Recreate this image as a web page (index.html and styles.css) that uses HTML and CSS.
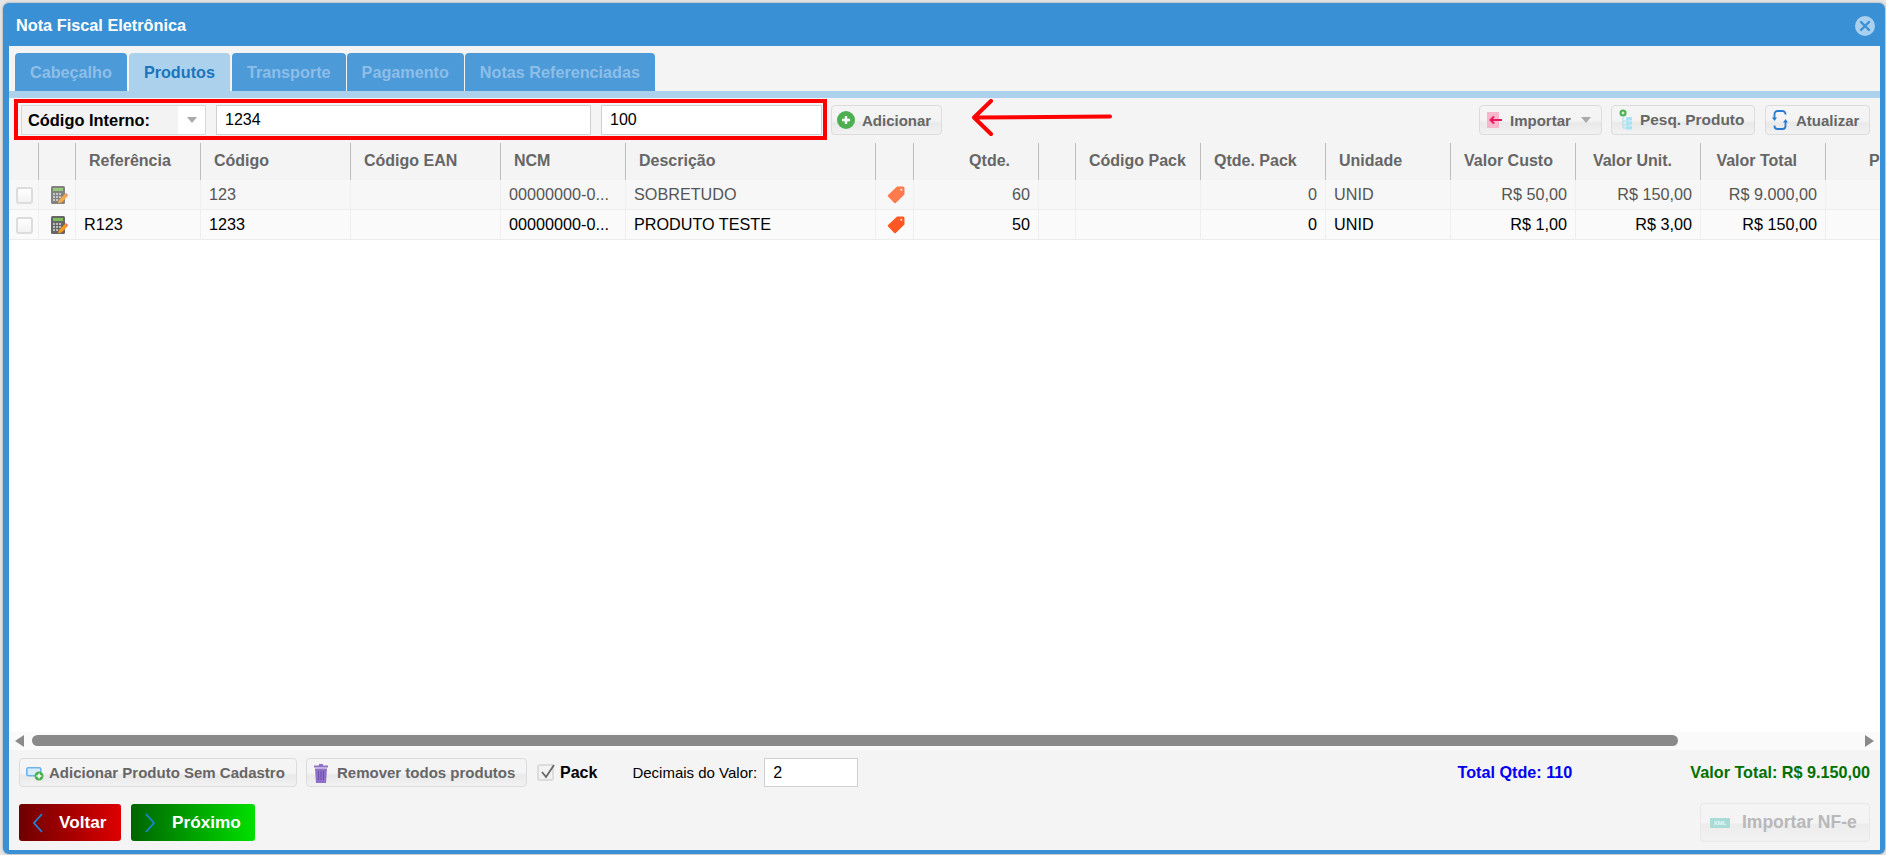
FILE: index.html
```html
<!DOCTYPE html>
<html lang="pt-BR">
<head>
<meta charset="utf-8">
<title>Nota Fiscal Eletrônica</title>
<link rel="stylesheet" href="styles.css">
</head>
<body>
<svg class="defs" width="0" height="0" aria-hidden="true">
  <symbol id="calc" viewBox="0 0 17 18">
    <rect x="0" y="0" width="14" height="18" rx="1.500" fill="#666"/>
    <rect x="2" y="2" width="10" height="3" fill="#7fc05a"/>
    <path d="M2 7h2v2H2zM5 7h2v2H5zM8 7h2v2H8zM2 10h2v2H2zM5 10h2v2H5zM8 10h2v2H8zM2 13h2v2H2zM5 13h2v2H5z" fill="#bbb"/>
    <path d="M7 17.500l1-3.500 6-6 2.500 2.500-6 6z" fill="#f59a1c"/>
    <path d="M14 8l1-1 2 2-1 1.500z" fill="#e8685c"/>
  </symbol>
  <symbol id="tag" viewBox="0 0 17 17">
    <path d="M9.500 .5H15a1.500 1.500 0 0 1 1.500 1.500v6L8.300 16a1 1 0 0 1-1.400 0L1 10a1 1 0 0 1 0-1.400z" fill="currentColor"/>
    <circle cx="13.500" cy="3.500" r="1" fill="#ffe3d8"/>
  </symbol>
</svg>

<main class="window">
  <header class="title-bar">
    <h1 class="title">Nota Fiscal Eletrônica</h1>
    <svg class="close" viewBox="0 0 20 20"><circle cx="10" cy="10" r="10" fill="#a9d0ef"/><path d="M6 6l8 8M14 6l-8 8" stroke="#3a90d4" stroke-width="2.400" stroke-linecap="round"/></svg>
  </header>

  <div class="content">
    <nav class="tabs">
      <a class="tab">Cabeçalho</a>
      <a class="tab active">Produtos</a>
      <a class="tab">Transporte</a>
      <a class="tab">Pagamento</a>
      <a class="tab">Notas Referenciadas</a>
    </nav>
    <div class="band"></div>

    <div class="toolbar">
      <div class="highlight">
        <div class="select"><span class="select-label">Código Interno:</span><span class="select-arrow"><i class="caret"></i></span></div>
        <div class="field code">1234</div>
        <div class="field qty">100</div>
      </div>
      <button class="btn add-btn">
        <svg class="ico18" viewBox="0 0 18 18"><circle cx="9" cy="9" r="9" fill="#4caf50"/><path d="M9 5v8M5 9h8" stroke="#fff" stroke-width="2.400"/></svg>
        Adicionar
      </button>
      <svg class="arrow" viewBox="0 0 144 38"><path d="M140 17.500L4 18.500M21 2L4 18.500 21 35" fill="none" stroke="#f00" stroke-width="4" stroke-linecap="round" stroke-linejoin="round"/></svg>
      <div class="tool-right">
        <button class="btn import-btn">
          <svg class="ico-imp" viewBox="0 0 15 16"><rect width="12" height="16" fill="#f8b6cc"/><path d="M3 8h12M7 4.500L3.500 8 7 11.500" fill="none" stroke="#f0185c" stroke-width="2"/></svg>
          Importar<i class="caret import-caret"></i>
        </button>
        <button class="btn pesq-btn">
          <svg class="ico-tree" viewBox="0 0 14 21"><circle cx="4" cy="4" r="3.500" fill="#4caf50"/><path d="M2.500 4h3M4 2.500v3" stroke="#fff"/><path d="M4 8v11h6M4 12h6M4 16h6" fill="none" stroke="#a9dcf5"/><rect x="7" y="8" width="6" height="3.500" fill="#a9e3f5"/><rect x="7" y="12.500" width="6" height="3.500" fill="#a9e3f5"/><rect x="7" y="17" width="6" height="3.500" fill="#a9e3f5"/></svg>
          Pesq. Produto
        </button>
        <button class="btn refresh-btn">
          <svg class="ico-ref" viewBox="0 0 16 22"><path d="M13.500 5.500V5a3 3 0 0 0-3-3H5.500a3 3 0 0 0-3 3v4M2.500 16.500V17a3 3 0 0 0 3 3h5a3 3 0 0 0 3-3v-4" fill="none" stroke="#2a7bd0" stroke-width="1.800"/><path d="M0 8.500h5L2.500 12zM16 13.500h-5L13.500 10z" fill="#2a7bd0"/></svg>
          Atualizar
        </button>
      </div>
    </div>

    <div class="grid-wrap">
      <table class="grid">
        <colgroup>
          <col class="c30"><col class="c37"><col class="c125"><col class="c150"><col class="c150"><col class="c125"><col class="c250"><col class="c38"><col class="c125"><col class="c37"><col class="c125"><col class="c125"><col class="c125"><col class="c125"><col class="c125"><col class="c125"><col class="c125">
        </colgroup>
        <thead>
          <tr>
            <th></th><th></th>
            <th>Referência</th><th>Código</th><th>Código EAN</th><th>NCM</th><th>Descrição</th><th></th>
            <th class="th-num">Qtde.</th><th></th><th>Código Pack</th><th>Qtde. Pack</th><th>Unidade</th>
            <th>Valor Custo</th><th class="th-num">Valor Unit.</th><th class="th-num">Valor Total</th><th class="th-last">P</th>
          </tr>
        </thead>
        <tbody>
          <tr class="row-muted">
            <td class="center"><span class="check"></span></td>
            <td class="center"><svg class="ico-calc"><use href="#calc"/></svg></td>
            <td></td><td>123</td><td></td><td>00000000-0...</td><td>SOBRETUDO</td>
            <td class="center"><svg class="ico-tag"><use href="#tag"/></svg></td>
            <td class="num">60</td><td></td><td></td><td class="num">0</td><td>UNID</td>
            <td class="num">R$ 50,00</td><td class="num">R$ 150,00</td><td class="num">R$ 9.000,00</td><td></td>
          </tr>
          <tr>
            <td class="center"><span class="check"></span></td>
            <td class="center"><svg class="ico-calc"><use href="#calc"/></svg></td>
            <td>R123</td><td>1233</td><td></td><td>00000000-0...</td><td>PRODUTO TESTE</td>
            <td class="center"><svg class="ico-tag"><use href="#tag"/></svg></td>
            <td class="num">50</td><td></td><td></td><td class="num">0</td><td>UNID</td>
            <td class="num">R$ 1,00</td><td class="num">R$ 3,00</td><td class="num">R$ 150,00</td><td></td>
          </tr>
        </tbody>
      </table>
    </div>

    <div class="scrollbar">
      <i class="sb-left"></i>
      <div class="sb-track"><div class="sb-thumb"></div></div>
      <i class="sb-right"></i>
    </div>

    <div class="footer">
      <div class="foot-row">
        <button class="btn foot-btn add-free">
          <svg class="ico-add" viewBox="0 0 18 17"><rect x=".8" y="3.800" width="14" height="8" rx="1.500" fill="#d8ecfb" stroke="#6db3ea" stroke-width="1.600"/><circle cx="13" cy="12" r="4.500" fill="#4caf50"/><path d="M13 9.500v5M10.500 12h5" stroke="#fff" stroke-width="1.500"/></svg>
          Adicionar Produto Sem Cadastro
        </button>
        <button class="btn foot-btn remove-all">
          <svg class="ico-trash" viewBox="0 0 14 20"><path d="M5 1h4v1.500h5v2H0v-2h5z" fill="#8e6fc9"/><path d="M1 5.500h12L12 20H2z" fill="#8e6fc9"/><path d="M4.500 8v9M7 8v9M9.500 8v9" stroke="#6f51ad"/></svg>
          Remover todos produtos
        </button>
        <span class="pack-check"><svg class="ico-tick" viewBox="0 0 17 17"><path d="M4 8l4 5 8-12" fill="none" stroke="#666" stroke-width="1.800"/></svg></span>
        <span class="pack-label">Pack</span>
        <span class="dec-label">Decimais do Valor:</span>
        <div class="field dec">2</div>
        <span class="total-qty">Total Qtde: 110</span>
        <span class="total-val">Valor Total: R$ 9.150,00</span>
      </div>
      <div class="foot-row nav-row">
        <button class="nav-btn back"><svg class="chev" viewBox="0 0 12 20"><path d="M10 1L2 10l8 9" fill="none" stroke="#1e84d8" stroke-width="1.800"/></svg>Voltar</button>
        <button class="nav-btn next"><svg class="chev" viewBox="0 0 12 20"><path d="M2 1l8 9-8 9" fill="none" stroke="#1e84d8" stroke-width="1.800"/></svg>Próximo</button>
        <button class="btn import-nfe"><span class="xml">XML</span>Importar NF-e</button>
      </div>
    </div>
  </div>
</main>
</body>
</html>
```
FILE: styles.css
```css
* { box-sizing: border-box; }
html, body { height: 100%; }
body {
  margin: 0;
  background: #e6e6e6;
  font-family: "Liberation Sans", Arial, sans-serif;
  overflow: hidden;
  padding: 3px 1px 1px 3px;
}
.defs { display: block; height: 0; }
button { font-family: inherit; cursor: default; }

.window {
  height: 851px;
  display: flex;
  flex-direction: column;
  background: #3a90d4;
  border-radius: 6px;
  padding: 0 5px 4px 6px;
  box-shadow: 0 0 3px rgba(0,0,0,.35);
}
.title-bar {
  height: 43px;
  flex: none;
  display: flex;
  align-items: center;
  justify-content: space-between;
  padding: 2px 0 0 7px;
}
.title { margin: 0; font-size: 16.3px; font-weight: bold; color: #fff; }
.close { width: 20px; height: 20px; margin-right: 5px; }

.content {
  flex: 1;
  min-height: 0;
  display: flex;
  flex-direction: column;
  background: #f4f4f4;
}

.tabs { display: flex; gap: 1px; padding: 7px 0 0 6px; height: 45px; flex: none; }
.tab {
  display: flex;
  align-items: center;
  justify-content: center;
  height: 38px;
  padding: 0 15px;
  background: #4c9ad8;
  color: #8cbee8;
  font-size: 16.2px;
  font-weight: bold;
  border-radius: 4px 4px 0 0;
  white-space: nowrap;
}
.tab.active { background: #acd1ec; color: #1b75bb; margin: 0 1px; }
.band { height: 7px; flex: none; background: #acd1ec; }

.toolbar {
  height: 45px;
  flex: none;
  display: flex;
  align-items: flex-start;
  padding: 1px 10px 0 5px;
}
.highlight {
  display: flex;
  gap: 10px;
  border: 4px solid #f00;
  padding: 2px 1px 1px 3px;
  height: 41px;
}
.select {
  width: 185px;
  height: 30px;
  display: flex;
  background: #f3f3f3;
  border: 1px solid #d8d8d8;
}
.select-label {
  flex: 1;
  padding-left: 6px;
  font-size: 16.4px;
  font-weight: bold;
  line-height: 28px;
  color: #000;
  white-space: nowrap;
}
.select-arrow {
  width: 27px;
  background: #fff;
  display: flex;
  align-items: center;
  justify-content: center;
}
.caret {
  display: block;
  width: 0;
  height: 0;
  border-left: 5px solid transparent;
  border-right: 5px solid transparent;
  border-top: 6px solid #aaa;
}
.field {
  height: 30px;
  background: #fff;
  border: 1px solid #d0d0d0;
  padding-left: 8px;
  font-size: 16px;
  line-height: 28px;
  color: #000;
}
.code { width: 375px; }
.qty { width: 221px; }
.dec { width: 94px; height: 29px; line-height: 27px; flex: none; }

.btn {
  height: 30px;
  display: flex;
  align-items: center;
  padding: 0;
  border: 1px solid #dcdcdc;
  border-radius: 4px;
  background: linear-gradient(#f4f4f4 0, #f4f4f4 50%, #e9e9e9 62%, #f2f2f2 100%);
  color: #666;
  font-size: 15px;
  font-weight: bold;
  white-space: nowrap;
}
.add-btn { margin: 6px 0 0 4px; width: 111px; padding-left: 5px; gap: 7px; }
.ico18 { width: 18px; height: 18px; flex: none; }
.arrow { width: 144px; height: 38px; flex: none; margin: 0 0 0 28px; }
.tool-right { margin-left: auto; margin-top: 6px; display: flex; gap: 9px; }
.import-btn { width: 123px; padding-left: 7px; }
.ico-imp { width: 15px; height: 16px; margin-right: 8px; flex: none; }
.import-caret { margin-left: 10px; }
.pesq-btn { width: 144px; padding-left: 7px; font-size: 15.4px; margin-right: 1px; }
.ico-tree { width: 14px; height: 21px; margin-right: 7px; flex: none; margin-top: -2px; }
.refresh-btn { width: 105px; padding-left: 6px; }
.ico-ref { width: 16px; height: 22px; margin-right: 8px; flex: none; }

.grid-wrap { flex: 1; min-height: 0; background: #fff; overflow: hidden; }
.grid {
  table-layout: fixed;
  border-collapse: separate;
  border-spacing: 0;
  width: 1942px;
  font-size: 16.2px;
}
.c30 { width: 30px; } .c37 { width: 37px; } .c38 { width: 38px; }
.c125 { width: 125px; } .c150 { width: 150px; } .c250 { width: 250px; }
.grid th {
  height: 37px;
  padding: 0 0 1px 13px;
  background: #f4f4f4;
  border-right: 1px solid #bdbdbd;
  color: #666;
  font-weight: bold;
  font-size: 16px;
  text-align: left;
  white-space: nowrap;
  overflow: hidden;
}
.grid th.th-num { text-align: right; padding: 0 28px 1px 0; }
.grid th.th-last { padding-left: 43px; border-right: 0; }
.grid td {
  height: 30px;
  padding: 0 8px;
  background: #fafafa;
  border-right: 1px solid #efefef;
  border-bottom: 1px solid #ececec;
  color: #000;
  white-space: nowrap;
  overflow: hidden;
}
.grid td.center { padding: 0; text-align: center; }
.grid td.num { text-align: right; }
.row-muted td { background: #f7f7f7; color: #555; }
.check {
  display: inline-block;
  width: 17px;
  height: 17px;
  margin-left: 1px;
  vertical-align: middle;
  background: linear-gradient(#fff, #f2f2f2);
  border: 2px solid #dcdcdc;
  border-radius: 3px;
}
.ico-calc { width: 17px; height: 18px; margin-left: 4px; vertical-align: middle; }
.row-muted .ico-calc { opacity: .8; }
.ico-tag { width: 18px; height: 18px; margin-left: 3px; vertical-align: middle; color: #ff5722; }
.row-muted .ico-tag { color: #ff7a4d; }

.scrollbar {
  height: 18px;
  flex: none;
  background: #fafafa;
  display: flex;
  align-items: center;
  padding: 0 6px 1px;
}
.sb-left, .sb-right {
  display: block;
  width: 0;
  height: 0;
  border-top: 6px solid transparent;
  border-bottom: 6px solid transparent;
  flex: none;
}
.sb-left { border-right: 9px solid #8a8a8a; }
.sb-right { border-left: 9px solid #8a8a8a; }
.sb-track { flex: 1; padding: 0 187px 0 8px; }
.sb-thumb { height: 11px; background: #8a8a8a; border-radius: 6px; }

.footer { height: 100px; flex: none; padding: 8px 10px 0 10px; display: flex; flex-direction: column; gap: 17px; }
.foot-row { display: flex; align-items: center; height: 29px; font-size: 14px; }
.foot-btn { font-size: 15px; height: 29px; }
.add-free { width: 278px; padding-left: 6px; gap: 5px; }
.ico-add { width: 18px; height: 17px; flex: none; }
.remove-all { width: 221px; margin-left: 9px; padding-left: 7px; gap: 9px; }
.ico-trash { width: 14px; height: 20px; flex: none; }
.pack-check {
  width: 17px;
  height: 17px;
  margin-left: 10px;
  flex: none;
  background: #f2f2f2;
  border: 2px solid #dcdcdc;
  border-radius: 3px;
  overflow: visible;
}
.ico-tick { display: block; width: 17px; height: 17px; margin: -2px 0 0 -1px; overflow: visible; }
.pack-label { margin-left: 6px; font-size: 16px; font-weight: bold; color: #000; }
.dec-label { margin-left: 35px; margin-right: 7px; font-size: 15px; color: #000; white-space: nowrap; }
.total-qty, .total-val { font-size: 16.2px; font-weight: bold; white-space: nowrap; }
.total-qty { margin-left: auto; color: #0000f0; }
.total-val { margin-left: 118px; color: #007000; }

.nav-row { height: 37px; align-items: flex-start; }
.nav-btn {
  height: 37px;
  display: flex;
  align-items: center;
  border: 0;
  border-radius: 3px;
  color: #fff;
  font-size: 17.2px;
  font-weight: bold;
  padding: 0;
}
.chev { width: 12px; height: 20px; flex: none; }
.back { width: 102px; padding-left: 13px; gap: 15px; background: linear-gradient(90deg, #6f0000, #dd0000); }
.next { width: 124px; margin-left: 10px; padding-left: 13px; gap: 16px; background: linear-gradient(90deg, #006400, #00e000); }
.import-nfe {
  width: 170px;
  height: 39px;
  margin-left: auto;
  margin-top: -1px;
  padding-left: 9px;
  gap: 12px;
  font-size: 17.5px;
  color: #b8b8b8;
  border-color: #e8e8e8;
  background: linear-gradient(#f4f4f4 0, #f4f4f4 50%, #ececec 55%, #f2f2f2 100%);
}
.xml {
  width: 20px;
  height: 10px;
  background: #a8dcd6;
  color: #e8f8f6;
  font-size: 6px;
  line-height: 10px;
  text-align: center;
  flex: none;
}
```
